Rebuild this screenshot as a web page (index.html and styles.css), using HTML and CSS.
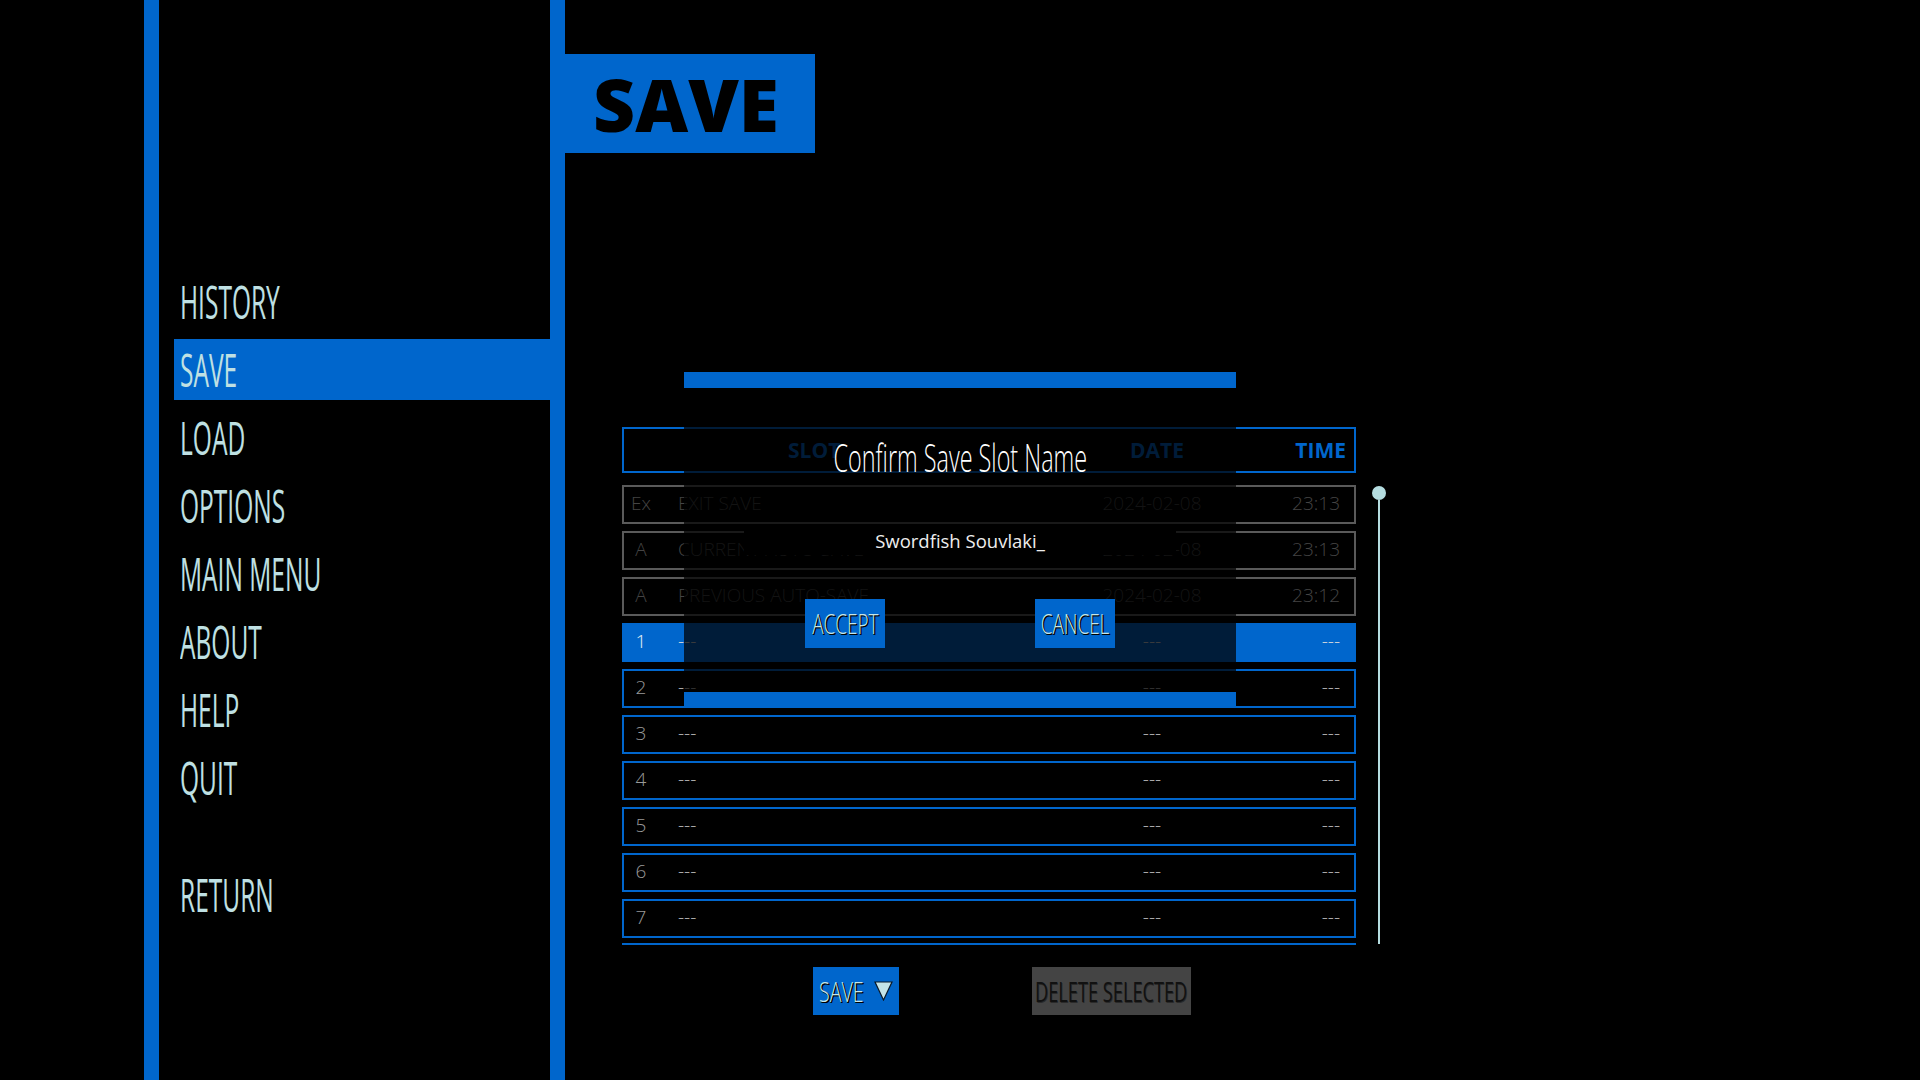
FILE: index.html
```html
<!DOCTYPE html>
<html>

<head>
    <meta charset="utf-8">
    <link rel="stylesheet" href="styles.css">
</head>

<body>
    <div class="screen">
        <div class="rail"></div>

        <nav class="nav">
            <div class="nav-list">
                <a class="nav-item"><span class="cond">HISTORY</span></a>
                <a class="nav-item active"><span class="cond">SAVE</span></a>
                <a class="nav-item"><span class="cond">LOAD</span></a>
                <a class="nav-item"><span class="cond">OPTIONS</span></a>
                <a class="nav-item"><span class="cond">MAIN MENU</span></a>
                <a class="nav-item"><span class="cond">ABOUT</span></a>
                <a class="nav-item"><span class="cond">HELP</span></a>
                <a class="nav-item"><span class="cond">QUIT</span></a>
            </div>
            <a class="nav-item return"><span class="cond">RETURN</span></a>
        </nav>

        <div class="rail"></div>

        <main class="main">
            <div class="page-title">SAVE</div>

            <section class="slots">
                <div class="slots-table">
                    <div class="slot-head">
                        <span></span>
                        <span class="h-slot">SLOT</span>
                        <span class="h-date">DATE</span>
                        <span class="h-time">TIME</span>
                    </div>

                    <div class="slot-list">
                        <div class="slot auto">
                            <span class="c-num">Ex</span>
                            <span class="c-name">EXIT SAVE</span>
                            <span class="c-date">2024-02-08</span>
                            <span class="c-time">23:13</span>
                        </div>
                        <div class="slot auto">
                            <span class="c-num">A</span>
                            <span class="c-name">CURRENT AUTO-SAVE</span>
                            <span class="c-date">2024-02-08</span>
                            <span class="c-time">23:13</span>
                        </div>
                        <div class="slot auto">
                            <span class="c-num">A</span>
                            <span class="c-name">PREVIOUS AUTO-SAVE</span>
                            <span class="c-date">2024-02-08</span>
                            <span class="c-time">23:12</span>
                        </div>
                        <div class="slot selected">
                            <span class="c-num">1</span>
                            <span class="c-name">---</span>
                            <span class="c-date">---</span>
                            <span class="c-time">---</span>
                        </div>
                        <div class="slot">
                            <span class="c-num">2</span>
                            <span class="c-name">---</span>
                            <span class="c-date">---</span>
                            <span class="c-time">---</span>
                        </div>
                        <div class="slot">
                            <span class="c-num">3</span>
                            <span class="c-name">---</span>
                            <span class="c-date">---</span>
                            <span class="c-time">---</span>
                        </div>
                        <div class="slot">
                            <span class="c-num">4</span>
                            <span class="c-name">---</span>
                            <span class="c-date">---</span>
                            <span class="c-time">---</span>
                        </div>
                        <div class="slot">
                            <span class="c-num">5</span>
                            <span class="c-name">---</span>
                            <span class="c-date">---</span>
                            <span class="c-time">---</span>
                        </div>
                        <div class="slot">
                            <span class="c-num">6</span>
                            <span class="c-name">---</span>
                            <span class="c-date">---</span>
                            <span class="c-time">---</span>
                        </div>
                        <div class="slot">
                            <span class="c-num">7</span>
                            <span class="c-name">---</span>
                            <span class="c-date">---</span>
                            <span class="c-time">---</span>
                        </div>
                    </div>

                    <div class="slot-end"></div>

                    <div class="actions">
                        <button class="btn btn-save"><span class="cond">SAVE</span>
                            <svg class="tri" width="19" height="20" viewBox="0 0 19 20"><polygon points="1,1 18,1 9.5,19" fill="#c4e4e8" stroke="#0a1a2a" stroke-width="1.2"/></svg>
                        </button>
                        <button class="btn btn-delete"><span class="cond">DELETE SELECTED</span></button>
                    </div>
                </div>

                <div class="scroll">
                    <div class="thumb"></div>
                    <div class="track"></div>
                </div>

                <!-- name prompt over the slot list -->
                <div class="dialog">
                    <div class="dialog-bar"></div>
                    <div class="dialog-body">
                        <div class="dialog-title"><span class="cond">Confirm Save Slot Name</span></div>
                        <div class="dialog-input">Swordfish Souvlaki_</div>
                        <div class="dialog-buttons">
                            <button class="btn dialog-btn"><span class="cond">ACCEPT</span></button>
                            <button class="btn dialog-btn"><span class="cond">CANCEL</span></button>
                        </div>
                    </div>
                    <div class="dialog-bar"></div>
                </div>
            </section>
        </main>
    </div>
</body>

</html>
```

FILE: styles.css
```css
html {
    background: #000;
}

body {
    margin: 0;
    background: #000;
    font-family: "Open Sans", "Noto Sans", sans-serif;
    overflow: hidden;
}

/* narrow display lettering, squeezed from Open Sans Light */
.cond {
    display: inline-block;
    white-space: nowrap;
    font-family: "Open Sans", sans-serif;
    font-weight: 300;
    transform-origin: center center;
}

.screen {
    display: flex;
    height: 1080px;
    padding-left: 144px;
}

.rail {
    width: 15px;
    flex-shrink: 0;
    background: #0066cc;
}

/* left menu */

.nav {
    width: 391px;
    flex-shrink: 0;
    box-sizing: border-box;
    padding: 271px 0 0 15px;
    display: flex;
    flex-direction: column;
}

.nav-list {
    display: flex;
    flex-direction: column;
    gap: 7px;
}

.nav-item {
    display: block;
    height: 61px;
    line-height: 61px;
    padding-left: 6px;
    font-size: 45px;
    color: #bfe0e3;
}

.nav-item .cond {
    font-weight: 400;
    transform: scaleX(0.545);
    transform-origin: left center;
}

.nav-item.active {
    background: #0066cc;
}

.return {
    margin-top: 56px;
}

/* right side */

.main {
    flex: 1;
    display: flex;
    flex-direction: column;
    align-items: flex-start;
    padding-top: 54px;
}

.page-title {
    width: 250px;
    height: 99px;
    box-sizing: border-box;
    padding-left: 28px;
    background: #0066cc;
    color: #000;
    font-weight: 800;
    font-size: 73px;
    line-height: 99px;
}

.slots {
    position: relative;
    display: flex;
    margin: 274px 0 0 57px;
}

.slots-table {
    width: 734px;
}

.slot-head,
.slot {
    display: grid;
    grid-template-columns: 34px 414px 160px 122px;
    align-items: center;
    box-sizing: border-box;
    border: 2px solid #0066cc;
}

.slot-head {
    height: 46px;
    font-weight: 700;
    font-size: 21px;
    color: #0066cc;
}

.h-slot {
    padding-left: 130px;
}

.h-date {
    text-align: center;
    padding-left: 10px;
}

.h-time {
    text-align: right;
    padding-right: 8px;
}

.slot-list {
    margin-top: 12px;
    display: flex;
    flex-direction: column;
    gap: 7px;
}

.slot {
    height: 39px;
    padding-bottom: 2px;
    font-weight: 300;
    font-size: 19px;
    line-height: 33px;
    color: #bbb;
    white-space: nowrap;
}

.c-num {
    text-align: center;
    color: #999;
}

.c-name {
    padding-left: 20px;
}

.c-date {
    text-align: center;
}

.c-time {
    text-align: right;
    padding-right: 14px;
}

.slot.auto {
    border-color: #5a5a5a;
    color: #444;
}

.slot.auto .c-num {
    color: #444;
}

.slot.selected {
    background: #0066cc;
    color: #ddd;
}

.slot.selected .c-num {
    color: #e6f2f4;
}

.slot-end {
    height: 2px;
    margin-top: 5px;
    background: #0066cc;
}

.actions {
    display: flex;
    gap: 133px;
    margin-top: 22px;
    padding-left: 191px;
}

.btn {
    height: 48px;
    border: 0;
    padding: 0;
    display: flex;
    align-items: center;
    justify-content: center;
    font-size: 28px;
    color: #c6e6ea;
    text-shadow: 1px 1px 0 #000, 2px 1px 0 #000;
}

.btn .cond {
    transform: scaleX(0.7);
}

.btn-save {
    width: 86px;
    justify-content: flex-start;
    gap: 12px;
    padding-left: 6px;
    background: #0066cc;
}

.btn-save .cond {
    width: 43px;
    transform-origin: left center;
}

.tri {
    flex-shrink: 0;
}

.btn-delete {
    width: 159px;
    background: #444;
    color: #111;
    text-shadow: 1px 1px 0 #2a2a2a;
}

.btn-delete .cond {
    font-weight: 400;
    transform: scaleX(0.65);
}

/* scrollbar */

.scroll {
    width: 14px;
    margin-left: 16px;
    padding-top: 59px;
    display: flex;
    flex-direction: column;
    align-items: center;
}

.thumb {
    width: 14px;
    height: 14px;
    border-radius: 50%;
    background: #b5dde0;
}

.track {
    width: 2px;
    height: 444px;
    background: #b5dde0;
}

/* confirm dialog */

.dialog {
    position: absolute;
    left: 62px;
    top: -55px;
    width: 552px;
    height: 336px;
    display: flex;
    flex-direction: column;
}

.dialog-bar {
    height: 16px;
    background: #0066cc;
}

.dialog-body {
    flex: 1;
    background: rgba(0, 0, 0, 0.72);
    display: flex;
    flex-direction: column;
    align-items: center;
}

.dialog-title {
    margin-top: 44px;
    height: 50px;
    line-height: 50px;
    font-size: 39px;
    color: #fff;
}

.dialog-title .cond {
    transform: scaleX(0.6);
}

.dialog-input {
    margin-top: 45px;
    width: 432px;
    height: 28px;
    line-height: 28px;
    background: #000;
    text-align: center;
    font-size: 18.5px;
    color: #eee;
}

.dialog-buttons {
    display: flex;
    gap: 150px;
    margin-top: 44px;
}

.dialog-btn {
    width: 80px;
    height: 49px;
    background: #0066cc;
    font-size: 27px;
}
```
